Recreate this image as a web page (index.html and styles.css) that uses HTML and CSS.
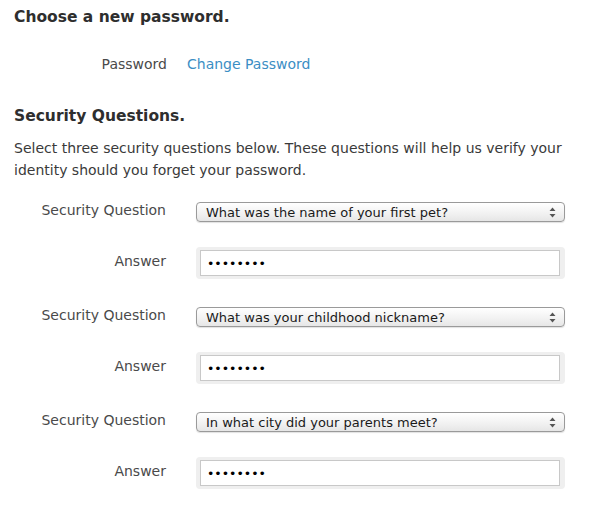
FILE: index.html
```html
<!DOCTYPE html>
<html>
<head>
<meta charset="utf-8">
<link rel="stylesheet" href="styles.css">
</head>
<body>
<div class="page">
  <h2 class="title">Choose a new password.</h2>
  <div class="pw-row">
    <span class="label">Password</span>
    <a class="link" href="#">Change Password</a>
  </div>

  <h2 class="title sq">Security Questions.</h2>
  <p class="intro">Select three security questions below. These questions will help us verify your identity should you forget your password.</p>

  <div class="group">
    <div class="row q">
      <span class="label">Security Question</span>
      <div class="select"><span>What was the name of your first pet?</span><svg class="arrows" width="7" height="11" viewBox="0 0 7 11"><path d="M3.5 0.5 L6.5 4 H0.5 Z M3.5 10.5 L6.5 7 H0.5 Z" fill="#555"/></svg></div>
    </div>
    <div class="row a">
      <span class="label">Answer</span>
      <div class="answer"><input class="pw" type="password" value="abcdefgh" readonly></div>
    </div>
  </div>

  <div class="group">
    <div class="row q">
      <span class="label">Security Question</span>
      <div class="select"><span>What was your childhood nickname?</span><svg class="arrows" width="7" height="11" viewBox="0 0 7 11"><path d="M3.5 0.5 L6.5 4 H0.5 Z M3.5 10.5 L6.5 7 H0.5 Z" fill="#555"/></svg></div>
    </div>
    <div class="row a">
      <span class="label">Answer</span>
      <div class="answer"><input class="pw" type="password" value="abcdefgh" readonly></div>
    </div>
  </div>

  <div class="group">
    <div class="row q">
      <span class="label">Security Question</span>
      <div class="select"><span>In what city did your parents meet?</span><svg class="arrows" width="7" height="11" viewBox="0 0 7 11"><path d="M3.5 0.5 L6.5 4 H0.5 Z M3.5 10.5 L6.5 7 H0.5 Z" fill="#555"/></svg></div>
    </div>
    <div class="row a">
      <span class="label">Answer</span>
      <div class="answer"><input class="pw" type="password" value="abcdefgh" readonly></div>
    </div>
  </div>
</div>
</body>
</html>
```

FILE: styles.css
```css
html, body {
  margin: 0;
  padding: 0;
  background: #fff;
}
.page {
  font-family: "DejaVu Sans", "Liberation Sans", sans-serif;
  color: #333;
  padding: 7px 14px 0 14px;
  width: 572px;
  box-sizing: content-box;
}
.title {
  font-size: 15.5px;
  font-weight: bold;
  color: #2e2e2e;
  margin: 0;
  line-height: 20px;
}
.pw-row {
  display: grid;
  grid-template-columns: 153px auto;
  column-gap: 20px;
  margin-top: 27px;
  font-size: 14px;
  line-height: 20px;
}
.label {
  text-align: right;
  color: #4a4a4a;
  font-size: 14px;
}
.link {
  color: #3b8ec4;
  text-decoration: none;
}
.sq {
  margin-top: 32px;
}
.intro {
  margin: 11px 0 0 0;
  font-size: 14px;
  line-height: 22px;
  color: #3a3a3a;
}
.group {
  display: flex;
  flex-direction: column;
  gap: 25px;
  margin-top: 21px;
  margin-bottom: 28px;
}
.group + .group {
  margin-top: 0;
}
.row {
  display: grid;
  grid-template-columns: 152px 369px;
  column-gap: 30px;
  align-items: center;
}
.row .label {
  margin-bottom: 4px;
}
.select {
  height: 20px;
  box-sizing: border-box;
  border: 1px solid #9a9a9a;
  border-radius: 4px;
  background: linear-gradient(#ffffff, #f1f1f1 60%, #e6e6e6);
  box-shadow: 0 1px 1px rgba(0,0,0,0.12);
  display: flex;
  align-items: center;
  justify-content: space-between;
  padding: 0 8px 0 9px;
  font-size: 13px;
  color: #1a1a1a;
}
.arrows {
  display: block;
}
.answer {
  height: 32px;
  box-sizing: border-box;
  background: #efefef;
  border-radius: 4px;
  padding: 3px 5px 3px 4px;
  display: flex;
}
.pw {
  flex: 1;
  min-width: 0;
  box-sizing: border-box;
  border: 1px solid #c8c8c8;
  background: #fff;
  margin: 0;
  padding: 0 6px;
  font-family: "DejaVu Sans", sans-serif;
  font-size: 12.5px;
  color: #000;
  outline: none;
}
```
